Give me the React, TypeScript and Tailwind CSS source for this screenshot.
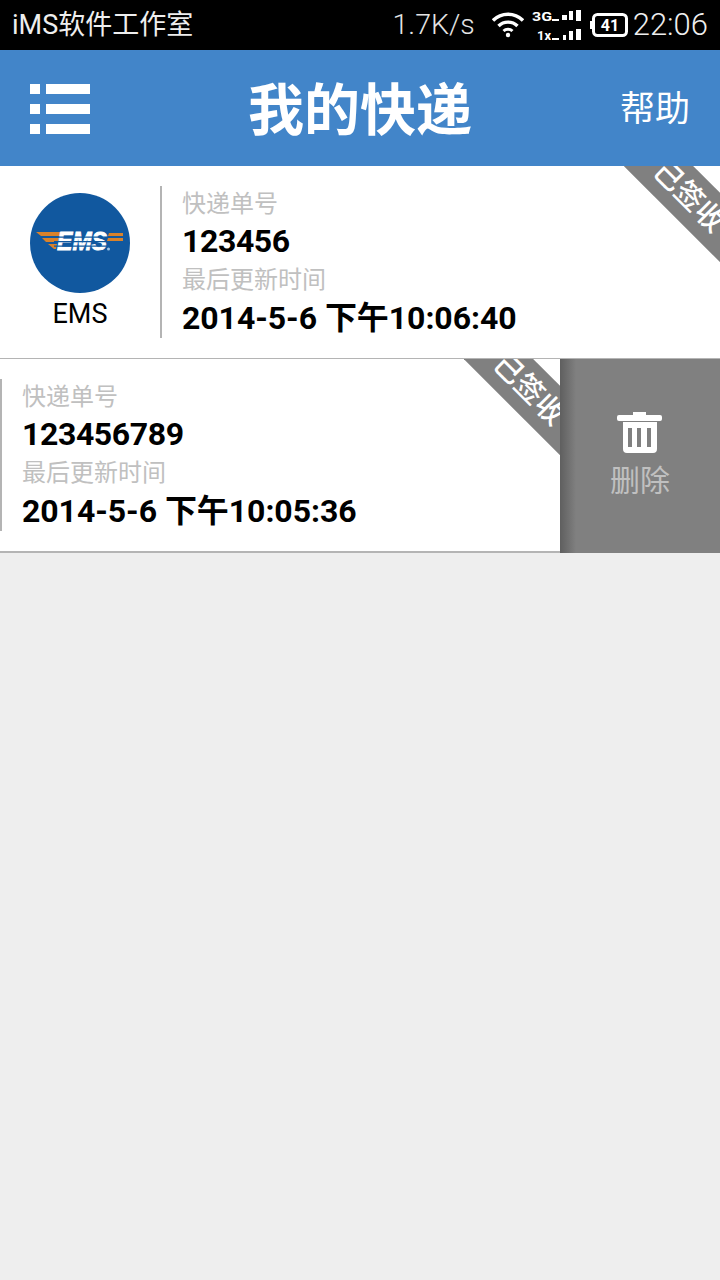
const CJK = "font-['Roboto','Noto_Sans_CJK_SC',sans-serif]";

function Ribbon() {
  return (
    <div className="absolute top-0 right-0 w-[96px] h-[96px] overflow-hidden">
      <div className="absolute left-[-5px] top-[6px] w-[140px] h-[49px] rotate-45 bg-[#808080] flex items-center justify-center text-white text-[29px] font-medium leading-none">
        己签收
      </div>
    </div>
  );
}

function Detail({ number, time }: { number: string; time: string }) {
  return (
    <div className="flex flex-col -mt-[2px]">
      <div className="h-[38px] text-[24px] leading-[38px] text-[#c0c0c0]">快递单号</div>
      <div className="h-[38px] text-[32px] leading-[36px] font-bold tracking-[-0.4px] text-black">{number}</div>
      <div className="h-[38px] text-[24px] leading-[38px] text-[#c0c0c0]">最后更新时间</div>
      <div className="h-[38px] text-[32px] leading-[38px] font-bold tracking-[-0.05px] text-black">{time}</div>
    </div>
  );
}

function EmsLogo() {
  return (
    <svg width="100" height="100" viewBox="0 0 100 100">
      <circle cx="50" cy="50" r="50" fill="#11589f" />
      <path d="M6 39h26l-1 4H11z M12 45h17l-1 4H16z M18 51h9l-1 5h-2z" fill="#d9822b" />
      <path d="M79 40h14v3H78z M78 45h15v3H77z" fill="#d9822b" />
      <text x="27" y="57" fontFamily="Liberation Sans" fontWeight="700" fontStyle="italic" fontSize="25" fill="#fff" stroke="#fff" strokeWidth="0.800" textLength="50" lengthAdjust="spacingAndGlyphs">EMS</text>
      <path d="M24 43.500h56v1.200H24z M24 48h56v1.200H24z M24 52.500h56v1.200H24z" fill="#11589f" />
      <circle cx="78.500" cy="56" r="1.500" fill="#9cc3e6" />
    </svg>
  );
}

function StatusIcons() {
  return (
    <div className="flex items-center">
      <svg width="32" height="26" viewBox="0 0 32 26" className="ml-[17px]">
        <path d="M1 8.500a21 21 0 0 1 30 0" fill="none" stroke="#fff" strokeWidth="3.400" />
        <path d="M6.500 14a13.500 13.500 0 0 1 19 0" fill="none" stroke="#fff" strokeWidth="3.400" />
        <path d="M11.500 19a6.500 6.500 0 0 1 9 0" fill="none" stroke="#fff" strokeWidth="3" />
        <circle cx="16" cy="23" r="2.200" fill="#fff" />
      </svg>
      <svg width="50" height="34" viewBox="0 0 50 34" className="ml-[8px]">
        <text x="0" y="13" fontFamily="Roboto" fontWeight="700" fontSize="12" fill="#fff" textLength="20" lengthAdjust="spacingAndGlyphs">3G</text>
        <rect x="20" y="11" width="7" height="2" fill="#fff" />
        <rect x="30" y="7" width="5" height="5" fill="#fff" />
        <rect x="37" y="3" width="4" height="9" fill="#fff" />
        <rect x="44" y="2" width="5" height="11" fill="#fff" />
        <text x="5" y="32" fontFamily="Roboto" fontWeight="700" fontSize="12" fill="#fff" textLength="14" lengthAdjust="spacingAndGlyphs">1x</text>
        <rect x="20" y="30" width="7" height="2" fill="#fff" />
        <rect x="31" y="27" width="3" height="5" fill="#fff" />
        <rect x="37" y="23" width="4" height="9" fill="#fff" />
        <rect x="44" y="21" width="5" height="11" fill="#fff" />
      </svg>
      <svg width="38" height="24" viewBox="0 0 38 24" className="ml-[8px]">
        <rect x="0" y="8" width="3" height="8" fill="#fff" />
        <rect x="3.500" y="1.500" width="33" height="21" rx="4" fill="none" stroke="#fff" strokeWidth="3" />
        <text x="20" y="18" textAnchor="middle" fontFamily="Roboto" fontWeight="700" fontSize="16" fill="#fff">41</text>
      </svg>
    </div>
  );
}

export default function App() {
  return (
    <div className={`w-[720px] h-[1280px] bg-[#eeeeee] flex flex-col ${CJK}`}>
      <div className="h-[50px] bg-black text-white flex items-center pl-[12px] pr-[12px]">
        <span className="text-[27px] text-[#eeeeee] flex-1">iMS软件工作室</span>
        <span className="text-[28.500px] font-light text-[#e4e4e4]">1.7K/s</span>
        <StatusIcons />
        <span className="text-[31px] font-light text-[#eeeeee] ml-[5px]">22:06</span>
      </div>

      <div className="h-[116px] bg-[#4285c9] flex items-center justify-between text-white">
        <div className="ml-[30px] mt-[2px] w-[60px] grid grid-cols-[10px_1fr] gap-x-[6px] gap-y-[10px]">
          <div className="h-[10px] bg-white" />
          <div className="h-[10px] bg-white" />
          <div className="h-[10px] bg-white" />
          <div className="h-[10px] bg-white" />
          <div className="h-[10px] bg-white" />
          <div className="h-[10px] bg-white" />
        </div>
        <div className="text-[56px] font-bold leading-none mt-[6px] ml-[10px]">我的快递</div>
        <div className="mr-[30px] text-[35px] leading-none mt-[2px]">帮助</div>
      </div>

      <div className="relative h-[193px] bg-white border-b border-[#b4b4b4] flex items-center">
        <div className="w-[160px] flex flex-col items-center">
          <div className="mt-[2px]">
            <EmsLogo />
          </div>
          <div className="mt-[2px] text-[27px] leading-[38px] text-black">EMS</div>
        </div>
        <div className="w-[2px] h-[152px] bg-[#b4b4b4]" />
        <div className="ml-[20px]">
          <Detail number="123456" time="2014-5-6 下午10:06:40" />
        </div>
        <Ribbon />
      </div>

      <div className="h-[194px] flex">
        <div className="relative w-[560px] bg-white border-b-2 border-[#b4b4b4] flex items-center">
          <div className="w-[2px] h-[152px] bg-[#b4b4b4]" />
          <div className="ml-[20px]">
            <Detail number="123456789" time="2014-5-6 下午10:05:36" />
          </div>
          <Ribbon />
        </div>
        <div className="relative w-[160px] bg-[#808080] flex flex-col items-center pt-[53px]">
          <div className="absolute left-0 top-0 bottom-0 w-[16px] bg-gradient-to-r from-[#5f5f5f] to-[#808080]" />
          <svg width="46" height="42" viewBox="0 0 46 42" className="relative">
            <path d="M16 0h13v3H16z" fill="#fff" />
            <rect x="0" y="3" width="45" height="6" rx="2" fill="#fff" />
            <path fillRule="evenodd" d="M6 10h34v27a4 4 0 0 1-4 4H10a4 4 0 0 1-4-4z M11 16v19h4V16z M20 16v19h4V16z M30 16v19h4V16z" fill="#fff" />
          </svg>
          <div className="relative mt-[7px] text-[30px] leading-[40px] text-[#c0c0c0]">删除</div>
        </div>
      </div>
    </div>
  );
}
